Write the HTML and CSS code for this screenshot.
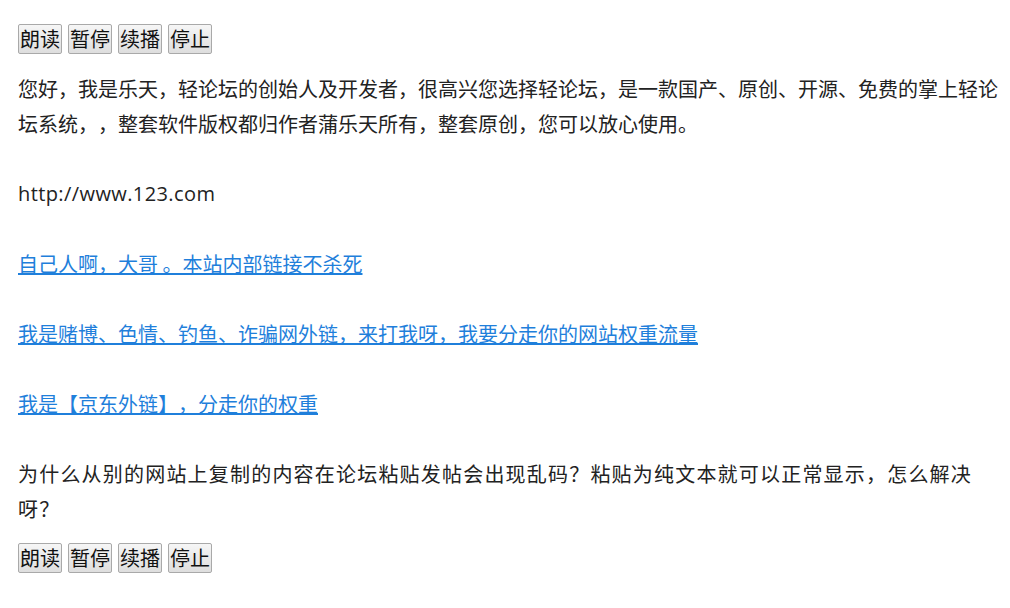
FILE: index.html
```html
<!DOCTYPE html>
<html lang="zh-CN">
<head>
    <meta charset="utf-8" />
    <title>轻论坛</title>
    <link rel="stylesheet" href="styles.css">
</head>
<body>
    <div class="speak">
        <button type="button">朗读</button>
        <button type="button">暂停</button>
        <button type="button">续播</button>
        <button type="button">停止</button>
    </div>
    <div class="content">
        <p>您好，我是乐天，轻论坛的创始人及开发者，很高兴您选择轻论坛，是一款国产、原创、开源、免费的掌上轻论坛系统，，整套软件版权都归作者蒲乐天所有，整套原创，您可以放心使用。</p>
        <p class="url">http://www.123.com</p>
        <p><a href="#">自己人啊，大哥 。本站内部链接不杀死</a></p>
        <p><a href="#">我是赌博、色情、钓鱼、诈骗网外链，来打我呀，我要分走你的网站权重流量</a></p>
        <p><a href="#">我是【京东外链】，分走你的权重</a></p>
        <p class="question">为什么从别的网站上复制的内容在论坛粘贴发帖会出现乱码？粘贴为纯文本就可以正常显示，怎么解决呀？</p>
    </div>
    <div class="speak">
        <button type="button">朗读</button>
        <button type="button">暂停</button>
        <button type="button">续播</button>
        <button type="button">停止</button>
    </div>
</body>
</html>
```

FILE: styles.css
```css
* {
    margin: 0;
    padding: 0;
}

body {
    padding: 24px 10px 0 18px;
    font-family: "Noto Sans CJK SC", sans-serif;
    font-size: 20px;
    line-height: 35px;
    color: #222;
    background: #fff;
    text-spacing-trim: space-all;
}

.speak {
    display: flex;
    gap: 6px;
}

.speak button {
    width: 44px;
    height: 30px;
    padding: 0;
    border: 1px solid #a9a9a9;
    border-radius: 2px;
    background: linear-gradient(#f6f6f6, #dedede);
    font-family: "Noto Sans CJK SC", sans-serif;
    font-size: 20px;
    line-height: 26px;
    color: #111;
    text-spacing-trim: space-all;
}

.content {
    margin: 17px 0;
}

.content p {
    margin-bottom: 35px;
}

.content p:last-child {
    margin-bottom: 0;
}

.content .url {
    font-family: "Open Sans", "Noto Sans CJK SC", sans-serif;
    letter-spacing: 0.4px;
}

.content a {
    color: #1f7fdb;
    text-decoration: underline;
}

.question {
    letter-spacing: 1.2px;
}
```
